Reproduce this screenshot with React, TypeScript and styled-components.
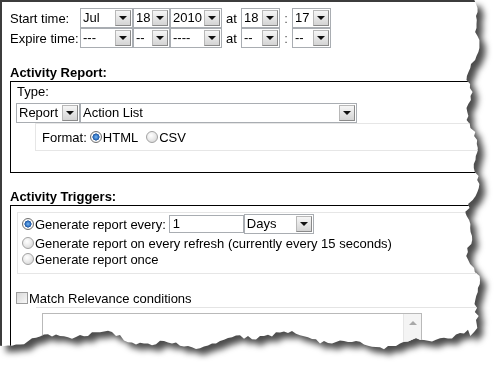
import React, { FC } from "react";
import styled, { createGlobalStyle, css } from "styled-components";

const GlobalStyle = createGlobalStyle`
  html, body {
    margin: 0;
    padding: 0;
    background: #fff;
  }
  body {
    font-family: "Liberation Sans", Arial, sans-serif;
    font-size: 13px;
    color: #000;
  }
`;

// deterministic jitter for the torn paper edge
const rand = (i: number) => {
  const s = Math.sin(i * 12.9898 + 78.233) * 43758.5453;
  return s - Math.floor(s);
};

const tornEdge = (() => {
  const pts: string[] = ["0px 0px"];
  for (let y = 0; y <= 336; y += 4) {
    const x =
      473 + 5 * Math.sin(y / 21) + 3 * Math.sin(y / 7.3 + 1) + (rand(y) - 0.5) * 4;
    pts.push(`${x.toFixed(1)}px ${y}px`);
  }
  for (let x = 468; x >= 0; x -= 4) {
    const y =
      340 + 6 * Math.sin(x / 31 + 2) + 3 * Math.sin(x / 9.7) + (rand(x + 999) - 0.5) * 4;
    pts.push(`${x}px ${y.toFixed(1)}px`);
  }
  return `polygon(${pts.join(", ")})`;
})();

const App: FC = () => {
  return (
    <>
      <GlobalStyle />
      <Shadow>
        <Paper>
          <TimeRow>
            <TimeLabel>Start time:</TimeLabel>
            <Select $w={53} value="Jul" />
            <Select $w={37} value="18" />
            <Select $w={52} value="2010" />
            <At>at</At>
            <Select $w={39} value="18" />
            <Colon>:</Colon>
            <Select $w={39} value="17" />
          </TimeRow>
          <TimeRow>
            <TimeLabel>Expire time:</TimeLabel>
            <Select $w={53} value="---" />
            <Select $w={37} value="--" />
            <Select $w={52} value="----" />
            <At>at</At>
            <Select $w={39} value="--" />
            <Colon>:</Colon>
            <Select $w={39} value="--" />
          </TimeRow>

          <Heading $top={17}>Activity Report:</Heading>
          <ReportBox>
            <TypeLabel>Type:</TypeLabel>
            <SelectRow>
              <Select $w={64} value="Report" />
              <Select $w={277} value="Action List" />
            </SelectRow>
            <FormatPanel>
              Format:
              <Option>
                <Radio $checked />
                HTML
              </Option>
              <Option $gap={8}>
                <Radio />
                CSV
              </Option>
            </FormatPanel>
          </ReportBox>

          <Heading $top={16}>Activity Triggers:</Heading>
          <TriggersBox>
            <TriggerPanel>
              <TriggerRow $tall>
                <Radio $checked />
                Generate report every:
                <TextInput>1</TextInput>
                <Select $w={70} value="Days" />
              </TriggerRow>
              <TriggerRow>
                <Radio />
                Generate report on every refresh (currently every 15 seconds)
              </TriggerRow>
              <TriggerRow>
                <Radio />
                Generate report once
              </TriggerRow>
            </TriggerPanel>
            <CheckRow>
              <Checkbox />
              Match Relevance conditions
            </CheckRow>
            <ConditionsPanel>
              <TextArea>
                <ScrollTrack>
                  <ScrollUp />
                </ScrollTrack>
              </TextArea>
            </ConditionsPanel>
          </TriggersBox>
        </Paper>
      </Shadow>
    </>
  );
};

const Select: FC<{ $w: number; value: string }> = ({ $w, value }) => (
  <SelectBox $w={$w}>
    <SelectValue>{value}</SelectValue>
    <SelectArrow />
  </SelectBox>
);

const Shadow = styled.div`
  width: 499px;
  height: 366px;
  filter: drop-shadow(6px 6px 3px rgba(0, 0, 0, 0.7));
`;

const Paper = styled.div`
  box-sizing: border-box;
  width: 499px;
  height: 366px;
  overflow: hidden;
  background: #fff;
  border-top: 2px solid #3c3c3c;
  border-left: 2px solid #3c3c3c;
  padding: 6px 0 0 8px;
  clip-path: ${tornEdge};
`;

const TimeRow = styled.div`
  display: flex;
  align-items: center;
  height: 20px;
`;

const TimeLabel = styled.span`
  width: 70px;
  white-space: nowrap;
`;

const At = styled.span`
  width: 19px;
  text-align: center;
`;

const Colon = styled.span`
  width: 12px;
  text-align: center;
  color: #555;
`;

const SelectBox = styled.div<{ $w: number }>`
  box-sizing: border-box;
  display: flex;
  width: ${(p) => p.$w}px;
  height: 20px;
  border: 1px solid #a9adb2;
  background: #fff;
  flex-shrink: 0;
`;

const SelectValue = styled.span`
  flex: 1;
  padding-left: 2px;
  line-height: 18px;
  white-space: nowrap;
  overflow: hidden;
`;

const SelectArrow = styled.span`
  box-sizing: border-box;
  width: 16px;
  margin: 1px;
  border: 1px solid #8a8a8a;
  border-top-color: #b8b8b8;
  border-left-color: #b8b8b8;
  background: linear-gradient(#f6f6f6, #d4d4d4);
  display: flex;
  align-items: center;
  justify-content: center;

  &::after {
    content: "";
    border-left: 4px solid transparent;
    border-right: 4px solid transparent;
    border-top: 4px solid #111;
  }
`;

const Heading = styled.div<{ $top: number }>`
  margin-top: ${(p) => p.$top}px;
  line-height: 16px;
  font-weight: bold;
`;

const ReportBox = styled.div`
  box-sizing: border-box;
  width: 500px;
  border: 1px solid #000;
  padding: 2px 0 21px 5px;
`;

const TypeLabel = styled.div`
  margin-left: 1px;
  line-height: 16px;
  margin-bottom: 3px;
`;

const SelectRow = styled.div`
  display: flex;
`;

const FormatPanel = styled.div`
  box-sizing: border-box;
  display: flex;
  align-items: center;
  height: 28px;
  margin-left: 19px;
  padding-left: 6px;
  border: 1px solid #e6e6e6;
  border-right: none;
`;

const Option = styled.span<{ $gap?: number }>`
  display: inline-flex;
  align-items: center;
  margin-left: ${(p) => p.$gap ?? 3}px;
`;

const Radio = styled.span<{ $checked?: boolean }>`
  box-sizing: border-box;
  display: inline-block;
  flex-shrink: 0;
  width: 12px;
  height: 12px;
  margin-right: 1px;
  border-radius: 50%;
  border: 1px solid #a2a2a2;
  background: radial-gradient(circle at 40% 35%, #ffffff 0, #eeeeee 40%, #cfcfcf 100%);

  ${(p) =>
    p.$checked &&
    css`
      border-color: #6f6f6f;
      background: radial-gradient(
        circle at 50% 50%,
        #7cb8f0 0,
        #2d6fc0 2.5px,
        #1d4f93 3.3px,
        #ffffff 3.8px,
        #e6e6e6 6px
      );
    `}
`;

const TriggersBox = styled.div`
  box-sizing: border-box;
  width: 500px;
  height: 300px;
  border: 1px solid #000;
  padding: 6px 0 0 6px;
`;

const TriggerPanel = styled.div`
  border: 1px solid #e6e6e6;
  border-right: none;
  padding: 0 0 6px 4px;
`;

const TriggerRow = styled.div<{ $tall?: boolean }>`
  display: flex;
  align-items: center;
  height: ${(p) => (p.$tall ? 22 : 16)}px;
  white-space: nowrap;
`;

const TextInput = styled.span`
  box-sizing: border-box;
  width: 75px;
  height: 18px;
  margin-left: 3px;
  padding-left: 3px;
  line-height: 16px;
  border: 1px solid #a9adb2;
`;

const CheckRow = styled.div`
  display: flex;
  align-items: center;
  margin: 16px 0 0 -1px;
  height: 16px;
`;

const Checkbox = styled.span`
  box-sizing: border-box;
  width: 12px;
  height: 12px;
  margin-right: 1px;
  border: 1px solid #9c9c9c;
  background: linear-gradient(135deg, #d8d8d8, #f8f8f8);
`;

const ConditionsPanel = styled.div`
  margin: 1px 0 0 19px;
  padding: 5px 0 0 6px;
  border-top: 1px solid #e4e4e4;
`;

const TextArea = styled.div`
  box-sizing: border-box;
  width: 380px;
  height: 120px;
  border: 1px solid #b9b9b9;
  display: flex;
  justify-content: flex-end;
`;

const ScrollTrack = styled.div`
  width: 17px;
  background: #f4f4f4;
  border-left: 1px solid #e6e6e6;
`;

const ScrollUp = styled.div`
  height: 17px;
  display: flex;
  align-items: center;
  justify-content: center;

  &::after {
    content: "";
    border-left: 4px solid transparent;
    border-right: 4px solid transparent;
    border-bottom: 4px solid #a8a8a8;
  }
`;

export default App;
